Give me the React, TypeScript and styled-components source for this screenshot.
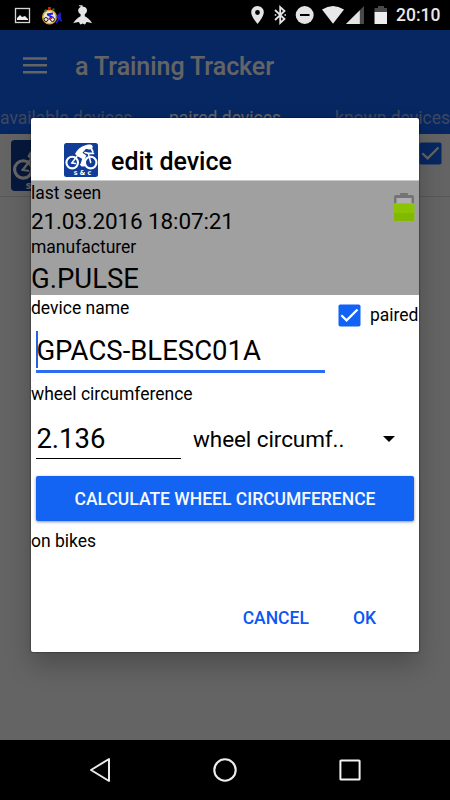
import React from "react";
import styled, { createGlobalStyle } from "styled-components";

const GlobalStyle = createGlobalStyle`
  *, *::before, *::after { box-sizing: border-box; }
  body { margin: 0; background: #000; font-family: Roboto, sans-serif; }
  svg { display: block; flex: none; }
`;

const Screen = styled.div`
  position: relative;
  display: flex;
  flex-direction: column;
  width: 450px;
  height: 800px;
  overflow: hidden;
  background: #000;
`;

const StatusBar = styled.header`
  display: flex;
  justify-content: space-between;
  height: 30px;
  padding: 0 10px 0 14px;
`;

const StatusGroup = styled.div<{ $gap: number }>`
  display: flex;
  align-items: center;
  gap: ${(p) => p.$gap}px;
`;

const Clock = styled.span`
  width: 44px;
  margin-left: 9px;
  color: #e9e9e9;
  font-size: 17.5px;
  font-weight: 500;
  line-height: 33px;
  white-space: nowrap;
`;

const Page = styled.div`
  position: relative;
  flex: 1;
  display: flex;
  flex-direction: column;
  overflow: hidden;
  background: #fafafa;
`;

const AppBar = styled.div`
  height: 103.5px;
  display: flex;
  flex-direction: column;
  justify-content: space-between;
  background: #1263f5;
`;

const Toolbar = styled.div`
  display: flex;
  align-items: center;
  gap: 28px;
  height: 70px;
  padding: 1px 0 0 23px;
`;

const AppTitle = styled.h1`
  margin: 0;
  padding-top: 2px;
  color: #fafafa;
  font-size: 25px;
  font-weight: 500;
  line-height: 30px;
  letter-spacing: -0.06px;
`;

const Tabs = styled.nav`
  display: grid;
  grid-template-columns: 1fr auto 1fr;
  height: 26px;
`;

const Tab = styled.span<{ $active?: boolean }>`
  color: ${(p) => (p.$active ? "#fafafa" : "#b7c8ec")};
  opacity: ${(p) => (p.$active ? 1 : 0.8)};
  font-size: 17.5px;
  line-height: 20px;
  white-space: nowrap;

  &:last-child { justify-self: end; }
`;

const DeviceRow = styled.div`
  display: flex;
  justify-content: space-between;
  height: 63.5px;
  padding: 6.5px 8.5px 0 10.5px;
  border-bottom: 1px solid #dadada;
`;

const RowCheck = styled.div`
  padding-top: 2px;
`;

const Scrim = styled.div`
  position: absolute;
  inset: 0;
  display: flex;
  align-items: flex-start;
  justify-content: center;
  padding-top: 88px;
  background: rgba(0, 0, 0, 0.6);
`;

const Dialog = styled.section`
  display: flex;
  flex-direction: column;
  width: 388px;
  height: 534px;
  border-radius: 2px;
  overflow: hidden;
  background: #fff;
  color: #000;
  box-shadow: 0 0 2px rgba(0, 0, 0, 0.7), 0 13px 26px rgba(0, 0, 0, 0.24);
`;

const DialogHeader = styled.div`
  display: flex;
  gap: 13px;
  height: 63px;
  padding: 25px 0 0 33px;
  border-bottom: 1px solid #c9c9c9;
`;

const DialogTitle = styled.h2`
  margin: 0;
  font-size: 25px;
  font-weight: 500;
  line-height: 37px;
`;

const Info = styled.div`
  display: flex;
  justify-content: space-between;
  height: 114px;
  padding: 0 2px 0 0;
  background: #a0a0a0;
`;

const Stack = styled.div`
  display: flex;
  flex-direction: column;
`;

const Label = styled.div<{ $height?: number }>`
  height: ${(p) => p.$height ?? 26}px;
  font-size: 17.5px;
  line-height: ${(p) => p.$height ?? 26}px;
  white-space: nowrap;
`;

const Value = styled.div<{ $size: number; $height: number; $tracking?: number }>`
  height: ${(p) => p.$height}px;
  font-size: ${(p) => p.$size}px;
  line-height: ${(p) => p.$height + 2}px;
  letter-spacing: ${(p) => p.$tracking ?? 0}px;
  white-space: nowrap;
`;

const BatterySlot = styled.div`
  padding-top: 11px;
`;

const NameSection = styled.div`
  display: flex;
  justify-content: space-between;
  height: 86px;
`;

const Field = styled.div<{ $width: number; $active?: boolean }>`
  display: flex;
  align-items: center;
  width: ${(p) => p.$width}px;
  height: ${(p) => (p.$active ? 42 : 40)}px;
  margin: ${(p) => (p.$active ? "10px 0 0 5px" : "0 0 0 5px")};
  padding-left: 0.4px;
  border-bottom: ${(p) => (p.$active ? "3px solid #2b6cf5" : "1px solid #000")};
  font-size: 27.5px;
  line-height: 40px;
  white-space: nowrap;
`;

const Caret = styled.span`
  width: 2px;
  height: 37px;
  margin-right: -2px;
  align-self: flex-start;
  background: #2861df;
`;

const CheckOption = styled.label`
  display: flex;
  align-items: center;
  gap: 9px;
  height: 40px;
  padding-right: 0.5px;
  font-size: 17.5px;
  white-space: nowrap;
`;

const WheelRow = styled.div`
  display: flex;
  height: 69px;
  padding-top: 12px;
`;

const Spinner = styled.div`
  display: flex;
  align-items: center;
  justify-content: space-between;
  width: 202px;
  height: 40px;
  margin-left: 12px;
  font-size: 22.5px;
  letter-spacing: -0.08px;
  white-space: nowrap;
`;

const RaisedButton = styled.button`
  height: 45px;
  margin: 0 5px 7px;
  padding: 0;
  border: 0;
  border-radius: 2px;
  background: #1464f4;
  color: #f6f9ff;
  font: 500 17.5px/46px Roboto, sans-serif;
  box-shadow: 0 1px 3px rgba(0, 0, 0, 0.45);
`;

const Actions = styled.div`
  display: flex;
  justify-content: flex-end;
  gap: 44px;
  margin-top: auto;
  padding: 0 43px 19px 0;
`;

const TextButton = styled.button`
  padding: 0;
  border: 0;
  background: none;
  color: #0b57f4;
  font: 500 17.5px/29px Roboto, sans-serif;
`;

const NavBar = styled.footer`
  display: flex;
  justify-content: center;
  align-items: center;
  gap: 101px;
  height: 60px;
`;

const CyclistIcon = ({ size }: { size: number }) => (
  <svg width={size} height={size} viewBox="0 0 34 34">
    <rect width="34" height="34" rx="2.5" fill="#113d99" />
    <g fill="none" stroke="#fff" strokeLinecap="round" strokeLinejoin="round">
      <circle cx="8.2" cy="19.6" r="5.8" strokeWidth="2.1" />
      <circle cx="26.7" cy="19.6" r="5.8" strokeWidth="2.1" />
      <path d="M8.2 19.5l5-6.5M7.5 20l4 .5M17 21.5l7-7M24.5 11l2.2 8.5" strokeWidth="1.5" />
      <path d="M21 9.5l3.5.8h5M27 5l1.8 3.5" strokeWidth="1.7" />
      <path d="M15 11.5l5 3-2.2 7.5h2.5" strokeWidth="2.8" />
    </g>
    <path d="M11 11C13 6.5 16.5 3.5 21.5 2.2c2-1 6.5-1.2 7 .8.8 2-1 3.6-3.5 3.4l-3-.6-3.5 3.9 4 3-2.7 4-6.3-3.5z" fill="#fff" />
    <text x="9.8" y="32.4" fill="#fff" fontSize="6.8" fontWeight="700" fontFamily="DejaVu Sans" textLength="17.4" lengthAdjust="spacingAndGlyphs">s &amp; c</text>
  </svg>
);

const Checkbox = ({ mark = "#fff" }: { mark?: string }) => (
  <svg width="23" height="23" viewBox="0 0 23 23">
    <rect x=".5" y=".5" width="22" height="22" rx="1.8" fill="#1263f5" />
    <path d="M3.3 11.3l5.3 5.1L19.5 5.5" fill="none" stroke={mark} strokeWidth="2.2" />
  </svg>
);

const BatteryIcon = () => (
  <svg width="25" height="32" viewBox="0 0 25 32">
    <path d="M8 3V1.5Q8 1 9 1h6q1 0 1 .5V3h4q2 0 2 2v22H2V5q0-2 2-2z" fill="#747474" />
    <path d="M4.5 6h15v6h-15z" fill="#b0b0b0" />
    <rect x="1.5" y="11.5" width="21" height="18" rx="1.5" fill="#83b800" stroke="#99b958" strokeWidth=".8" />
    <path d="M2 12h20v9H2z" fill="#8bc400" />
  </svg>
);

const StatusLeftIcons = () => (
  <StatusGroup $gap={10}>
    <svg width="17" height="17" viewBox="0 0 17 17">
      <rect x="1.5" y="1.5" width="14" height="14" fill="none" stroke="#d5d5d5" strokeWidth="1.3" />
      <path d="M3 13v-2l3-3 2 2 3-1 3 3v1z" fill="#eee" />
    </svg>
    <svg width="22" height="20" viewBox="0 0 22 20">
      <circle cx="8.5" cy="12" r="6.7" fill="#e9e7df" stroke="#e6a523" strokeWidth="1.6" />
      <path d="M7 2h3v3H7z" fill="#d51b18" />
      <path d="M3 5l2-1 1 1-2 2zM12 3l2 1-1 2-2-1z" fill="#137a28" />
      <g fill="none" stroke="#202020"><circle cx="5" cy="14.5" r="2" /><circle cx="11.5" cy="14.5" r="2" /></g>
      <path d="M6 9.5l6-1M7 10l4 2-3 2" fill="none" stroke="#1d19ec" strokeWidth="1.9" />
      <path d="M7 14.5l5-2" stroke="#d02a3b" />
      <path d="M19 7.5v5l1.5 4M18.5 9l-2.5 3 2 2-3 4M18.5 10l-1 5" fill="none" stroke="#2320d3" strokeWidth="1.5" />
    </svg>
    <svg width="20" height="22" viewBox="0 0 20 22">
      <path d="M6 1.2h3.5v1.3c3.2.2 4.5 2 4.5 4 0 1.7-1 3-2.2 3.7v2c2.2 1.2 5.2 3.2 7.4 7-2.5-.4-4-1.3-5.5-1.2-.8.6-.8 1.8-2 2.5l-2-1-2 1c-1.2-.7-1.2-1.9-2-2.5-1.5-.1-3 .8-5.5 1.2 2.2-3.8 5.2-5.8 7.4-7v-2C6.200 9.500 5.200 8.200 5.200 6.500c0-1.600.8-2.900 2.300-3.600V2.200H6z" fill="#e4e4e4" />
    </svg>
  </StatusGroup>
);

const StatusRightIcons = () => (
  <StatusGroup $gap={0}>
    <svg width="137" height="22" viewBox="250 4 137 22">
      <path d="M257.5 6a6.3 6.3 0 0 0-6.3 6.3c0 4.5 6.3 11.7 6.3 11.7s6.3-7.2 6.3-11.7a6.3 6.3 0 0 0-6.3-6.3zm0 4.1a2.4 2.4 0 1 1 0 4.8 2.4 2.4 0 0 1 0-4.8z" fill="#e4e4e4" />
      <path d="M275 10l9.5 9-4.3 4V7l4.3 4-9.5 9" fill="none" stroke="#e4e4e4" strokeWidth="1.8" />
      <circle cx="275.5" cy="15" r=".9" fill="#ccc" />
      <circle cx="285.2" cy="15" r=".9" fill="#ccc" />
      <circle cx="304.7" cy="15" r="9" fill="#e4e4e4" />
      <path d="M300 15h9.500" stroke="#000" strokeWidth="2" />
      <path d="M322 9.6q11-7.4 22 0L333 23.8z" fill="#e8e8e8" />
      <path d="M346 24L364 6v18z" fill="#494949" />
      <path d="M346 24l13.8-13.8V24z" fill="#e4e4e4" />
      <path d="M374.5 8h3.5V6h6v2h3v4h-12.5z" fill="#494949" />
      <path d="M374.5 12H387v12h-12.5z" fill="#ededed" />
    </svg>
    <Clock>20:10</Clock>
  </StatusGroup>
);

export default function App() {
  return (
    <>
      <GlobalStyle />
      <Screen>
        <StatusBar>
          <StatusLeftIcons />
          <StatusRightIcons />
        </StatusBar>
        <Page>
          <AppBar>
            <Toolbar>
              <svg width="24" height="18" viewBox="0 0 24 18">
                <path d="M0 1.5h24M0 8.3h24M0 15.2h24" stroke="#fafafa" strokeWidth="2.4" />
              </svg>
              <AppTitle>a Training Tracker</AppTitle>
            </Toolbar>
            <Tabs>
              <Tab>available devices</Tab>
              <Tab $active>paired devices</Tab>
              <Tab>known devices</Tab>
            </Tabs>
          </AppBar>
          <DeviceRow>
            <CyclistIcon size={51} />
            <RowCheck><Checkbox mark="#fafafa" /></RowCheck>
          </DeviceRow>
          <Scrim>
            <Dialog>
              <DialogHeader>
                <CyclistIcon size={34} />
                <DialogTitle>edit device</DialogTitle>
              </DialogHeader>
              <Info>
                <Stack>
                  <Label $height={24}>last seen</Label>
                  <Value $size={22.5} $height={30} $tracking={-0.14}>21.03.2016 18:07:21</Value>
                  <Label $height={25}>manufacturer</Label>
                  <Value $size={27.5} $height={35}>G.PULSE</Value>
                </Stack>
                <BatterySlot><BatteryIcon /></BatterySlot>
              </Info>
              <NameSection>
                <Stack>
                  <Label>device name</Label>
                  <Field $width={289} $active><Caret />GPACS-BLESC01A</Field>
                </Stack>
                <CheckOption><Checkbox />paired</CheckOption>
              </NameSection>
              <Label>wheel circumference</Label>
              <WheelRow>
                <Field $width={145}>2.136</Field>
                <Spinner>
                  wheel circumf..
                  <svg width="12" height="6" viewBox="0 0 12 6"><path d="M0 0h12L6 6z" /></svg>
                </Spinner>
              </WheelRow>
              <RaisedButton>CALCULATE WHEEL CIRCUMFERENCE</RaisedButton>
              <Label>on bikes</Label>
              <Actions>
                <TextButton>CANCEL</TextButton>
                <TextButton>OK</TextButton>
              </Actions>
            </Dialog>
          </Scrim>
        </Page>
        <NavBar>
          <svg width="24" height="26" viewBox="0 0 24 26">
            <path d="M21 2v22L3 13z" fill="none" stroke="#e9e9e9" strokeWidth="2" strokeLinejoin="round" />
          </svg>
          <svg width="24" height="24" viewBox="0 0 24 24">
            <circle cx="12" cy="12" r="10.7" fill="none" stroke="#ededed" strokeWidth="2.1" />
          </svg>
          <svg width="24" height="24" viewBox="0 0 24 24">
            <rect x="2.4" y="2.4" width="19.2" height="19.2" rx=".7" fill="none" stroke="#f2f2f2" strokeWidth="2" />
          </svg>
        </NavBar>
      </Screen>
    </>
  );
}
